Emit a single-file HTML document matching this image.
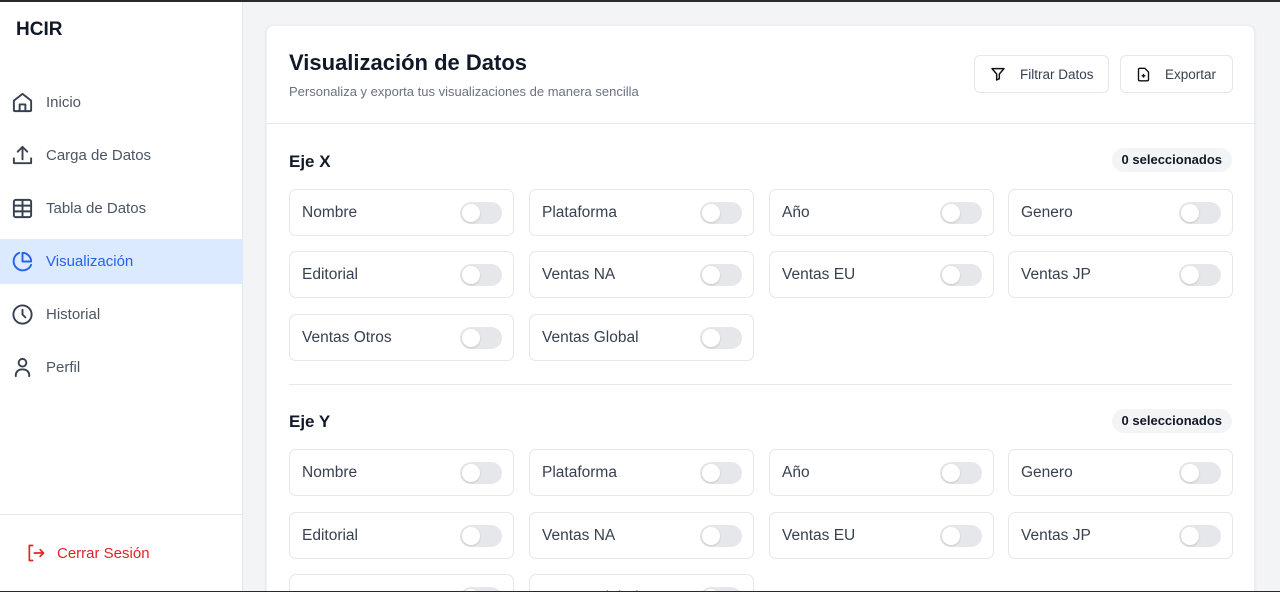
<!DOCTYPE html>
<html><head><meta charset="utf-8"><style>
*{box-sizing:border-box;margin:0;padding:0}
html,body{width:1280px;height:592px;overflow:hidden}
body{background:#f3f4f6;font-family:"Liberation Sans",sans-serif;position:relative;color:#111827}
.top{position:absolute;left:0;top:0;width:1280px;height:2px;background:#2a2a2a;z-index:5}
.bot{position:absolute;left:0;top:591px;width:1280px;height:1px;background:#2a2a2a;z-index:5}
.side{position:absolute;left:0;top:0;width:243px;height:592px;background:#fff;border-right:1px solid #e5e7eb}
.logo{position:absolute;left:16px;top:19px;font-weight:bold;font-size:19px;color:#111827}
.nav{position:absolute;left:0;width:243px;height:45px;display:flex;align-items:center;padding-left:11px;font-size:15px;color:#4b5563}
.nav svg{width:23px;height:23px;margin-right:12px}
.nav.act{background:#dbeafe;color:#2563eb}
.sep{position:absolute;left:0;top:514px;width:243px;height:1px;background:#e5e7eb}
.logout{position:absolute;left:26px;top:543px;font-size:15px;color:#dc2626;display:flex;align-items:center}
.logout svg{margin-right:11px}
.card{position:absolute;left:266px;top:25px;width:989px;height:580px;background:#fff;border-radius:8px;box-shadow:0 1px 3px rgba(0,0,0,.08);border:1px solid #eceef1}
h1{position:absolute;left:22px;top:24px;font-size:22px;font-weight:bold;color:#111827}
.sub{position:absolute;left:22px;top:58px;font-size:13px;color:#6b7280}
.btn{position:absolute;top:29px;height:38px;border:1px solid #e5e7eb;border-radius:6px;font-size:13.5px;color:#374151;display:flex;align-items:center;padding-left:15px}
.btn svg{margin-right:14px}
.hr{position:absolute;left:0;width:989px;height:1px;background:#e5e7eb}
.hr2{position:absolute;left:22px;width:943px;height:1px;background:#e5e7eb}
.sec{position:absolute;left:22px;font-size:17px;font-weight:bold}
.badge{position:absolute;right:22px;height:24px;padding:0 10px;border-radius:12px;background:#f3f4f6;font-size:13px;font-weight:bold;line-height:24px;color:#111827}
.it{position:absolute;width:225px;height:47px;border:1px solid #e5e7eb;border-radius:7px;font-size:15.5px;color:#374151;padding-left:12px;line-height:46px}
.tg{position:absolute;right:11px;top:12px;width:42px;height:22px;border-radius:11px;background:#e5e7eb}
.tg:after{content:"";position:absolute;left:2px;top:2px;width:18px;height:18px;border-radius:50%;background:#fff;box-shadow:0 1px 2px rgba(0,0,0,.15)}
</style></head><body>
<div class="top"></div><div class="bot"></div>
<div class="side">
<div class="logo">HCIR</div>
<div class="nav" style="top:80px"><svg viewBox="0 0 24 24" fill="none" stroke="#374151" stroke-width="2" stroke-linecap="round" stroke-linejoin="round"><path d="M3 10l9-7 9 7v10a1 1 0 0 1-1 1H4a1 1 0 0 1-1-1z"/><path d="M9 21v-7h6v7"/></svg>Inicio</div>
<div class="nav" style="top:133px"><svg viewBox="0 0 24 24" fill="none" stroke="#374151" stroke-width="2" stroke-linecap="round" stroke-linejoin="round"><path d="M3 15v5h18v-5M12 3v13M7 8l5-5 5 5"/></svg>Carga de Datos</div>
<div class="nav" style="top:186px"><svg viewBox="0 0 24 24" fill="none" stroke="#374151" stroke-width="2"><rect x="3" y="3" width="18" height="18" rx="2"/><path d="M3 9h18M3 15h18M12 3v18"/></svg>Tabla de Datos</div>
<div class="nav act" style="top:239px"><svg viewBox="0 0 24 24" fill="none" stroke="#2563eb" stroke-width="2" stroke-linecap="round" stroke-linejoin="round"><path d="M21 15.5A9.5 9.5 0 1 1 8.5 3"/><path d="M21 12A9 9 0 0 0 12 3v9z"/></svg>Visualización</div>
<div class="nav" style="top:292px"><svg viewBox="0 0 24 24" fill="none" stroke="#374151" stroke-width="2" stroke-linecap="round"><circle cx="12" cy="12" r="9.5"/><path d="M12 7v5l3 3"/></svg>Historial</div>
<div class="nav" style="top:345px"><svg viewBox="0 0 24 24" fill="none" stroke="#374151" stroke-width="2" stroke-linecap="round"><circle cx="12" cy="7" r="4"/><path d="M5 21v-1a6 6 0 0 1 6-6h2a6 6 0 0 1 6 6v1"/></svg>Perfil</div>
<div class="sep"></div>
<div class="logout"><svg width="20" height="20" viewBox="0 0 24 24" fill="none" stroke="#dc2626" stroke-width="2" stroke-linecap="round" stroke-linejoin="round"><path d="M8 3H4v18h4M10 12h11M17 8l4 4-4 4"/></svg>Cerrar Sesión</div>
</div>
<div class="card">
<h1>Visualización de Datos</h1>
<div class="sub">Personaliza y exporta tus visualizaciones de manera sencilla</div>
<div class="btn" style="left:707px;width:135px"><svg width="16" height="16" viewBox="0 0 24 24" fill="none" stroke="#111" stroke-width="2.2" stroke-linejoin="round"><path d="M3 4h18l-7 8v7l-4 2v-9z"/></svg>Filtrar Datos</div>
<div class="btn" style="left:853px;width:113px"><svg width="15" height="15" viewBox="0 0 24 24" fill="none" stroke="#111" stroke-width="2.2" stroke-linejoin="round"><path d="M14 2H6a2 2 0 0 0-2 2v16a2 2 0 0 0 2 2h12a2 2 0 0 0 2-2V8z"/><path d="M12 11v6M9 14h6"/></svg>Exportar</div>
<div class="hr" style="top:97px"></div>
<div class="sec" style="top:126px">Eje X</div>
<div class="badge" style="top:122px">0 seleccionados</div>
<div class="hr2" style="top:358px"></div>
<div class="sec" style="top:386px">Eje Y</div>
<div class="badge" style="top:383px">0 seleccionados</div>
<div class="it" style="left:22px;top:163px">Nombre<div class="tg"></div></div>
<div class="it" style="left:262px;top:163px">Plataforma<div class="tg"></div></div>
<div class="it" style="left:502px;top:163px">Año<div class="tg"></div></div>
<div class="it" style="left:741px;top:163px">Genero<div class="tg"></div></div>
<div class="it" style="left:22px;top:225px">Editorial<div class="tg"></div></div>
<div class="it" style="left:262px;top:225px">Ventas NA<div class="tg"></div></div>
<div class="it" style="left:502px;top:225px">Ventas EU<div class="tg"></div></div>
<div class="it" style="left:741px;top:225px">Ventas JP<div class="tg"></div></div>
<div class="it" style="left:22px;top:288px">Ventas Otros<div class="tg"></div></div>
<div class="it" style="left:262px;top:288px">Ventas Global<div class="tg"></div></div>
<div class="it" style="left:22px;top:423px">Nombre<div class="tg"></div></div>
<div class="it" style="left:262px;top:423px">Plataforma<div class="tg"></div></div>
<div class="it" style="left:502px;top:423px">Año<div class="tg"></div></div>
<div class="it" style="left:741px;top:423px">Genero<div class="tg"></div></div>
<div class="it" style="left:22px;top:486px">Editorial<div class="tg"></div></div>
<div class="it" style="left:262px;top:486px">Ventas NA<div class="tg"></div></div>
<div class="it" style="left:502px;top:486px">Ventas EU<div class="tg"></div></div>
<div class="it" style="left:741px;top:486px">Ventas JP<div class="tg"></div></div>
<div class="it" style="left:22px;top:548px">Ventas Otros<div class="tg"></div></div>
<div class="it" style="left:262px;top:548px">Ventas Global<div class="tg"></div></div>
</div>
</body></html>
